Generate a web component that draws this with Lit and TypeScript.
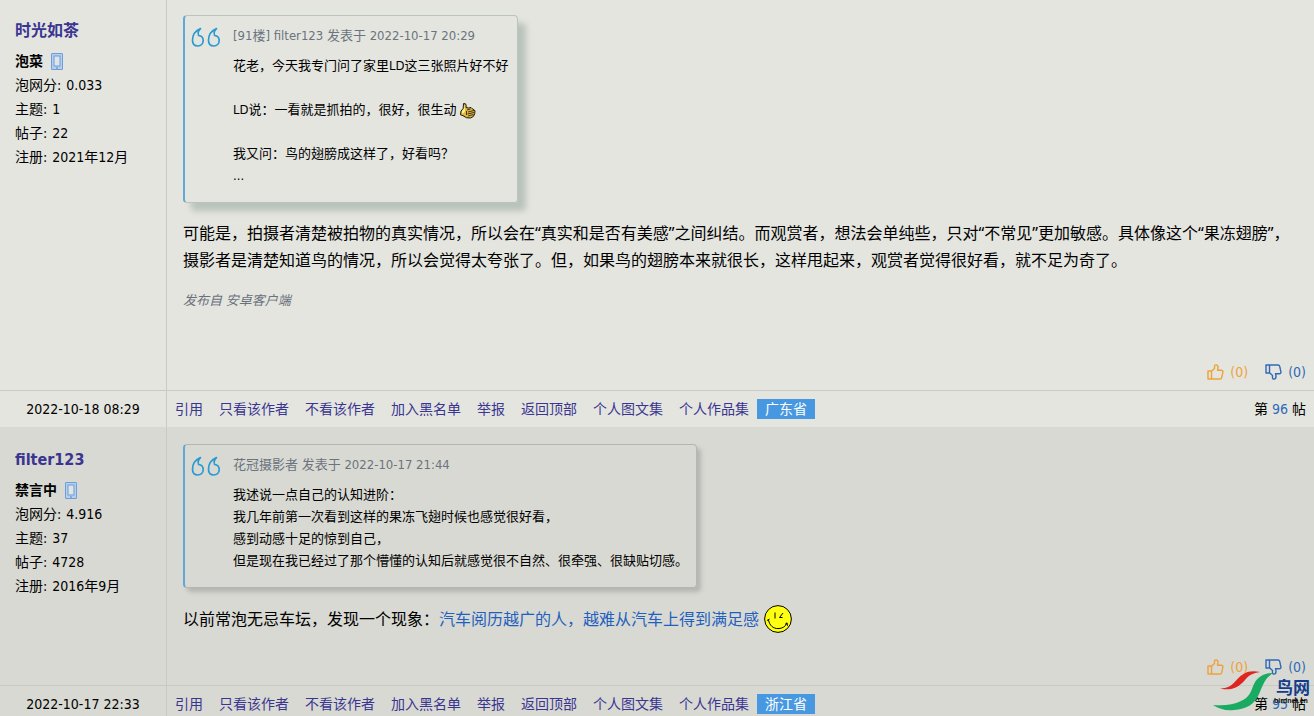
import { LitElement, html, css, nothing } from "lit";
import { customElement, property } from "lit/decorators.js";

interface Post {
  user: string;
  rank: string;
  stats: [string, string][];
  date: string;
  region: string;
  floor: number;
  quoteHead: string;
  quoteLines: string[];
  thumbLine?: number;
  text: string;
  link?: string;
  signature?: string;
  alt: boolean;
}

const POSTS: Post[] = [
  {
    user: "时光如茶",
    rank: "泡菜",
    stats: [["泡网分", "0.033"], ["主题", "1"], ["帖子", "22"], ["注册", "2021年12月"]],
    date: "2022-10-18 08:29",
    region: "广东省",
    floor: 96,
    quoteHead: "[91楼] filter123 发表于 2022-10-17 20:29",
    quoteLines: ["花老，今天我专门问了家里LD这三张照片好不好", "", "LD说：一看就是抓拍的，很好，很生动", "", "我又问：鸟的翅膀成这样了，好看吗？", "..."],
    thumbLine: 2,
    text: "可能是，拍摄者清楚被拍物的真实情况，所以会在“真实和是否有美感”之间纠结。而观赏者，想法会单纯些，只对“不常见”更加敏感。具体像这个“果冻翅膀”，摄影者是清楚知道鸟的情况，所以会觉得太夸张了。但，如果鸟的翅膀本来就很长，这样甩起来，观赏者觉得很好看，就不足为奇了。",
    signature: "发布自 安卓客户端",
    alt: false,
  },
  {
    user: "filter123",
    rank: "禁言中",
    stats: [["泡网分", "4.916"], ["主题", "37"], ["帖子", "4728"], ["注册", "2016年9月"]],
    date: "2022-10-17 22:33",
    region: "浙江省",
    floor: 95,
    quoteHead: "花冠摄影者 发表于 2022-10-17 21:44",
    quoteLines: ["我述说一点自己的认知进阶：", "我几年前第一次看到这样的果冻飞翅时候也感觉很好看，", "感到动感十足的惊到自己，", "但是现在我已经过了那个懵懂的认知后就感觉很不自然、很牵强、很缺贴切感。"],
    text: "以前常泡无忌车坛，发现一个现象：",
    link: "汽车阅历越广的人，越难从汽车上得到满足感",
    alt: true,
  },
];

const ACTIONS = ["引用", "只看该作者", "不看该作者", "加入黑名单", "举报", "返回顶部", "个人图文集", "个人作品集"];

const phoneIcon = html`<svg class="phone" viewBox="0 0 12 17" width="12" height="17" aria-hidden="true">
  <rect x="0.5" y="0.5" width="11" height="16" rx="0.5" fill="#b9cfe8" stroke="#6a9ede" />
  <rect x="3" y="3" width="6" height="10" fill="#dfe4e4" stroke="#6a9ede" />
  <path d="M5 15h2" stroke="#4f86d0" />
</svg>`;

const quoteIcon = html`<svg class="marks" viewBox="0 0 30 21" width="30" height="21" fill="none" stroke="#2a9ad2" stroke-width="1.7" stroke-linecap="round" stroke-linejoin="round" aria-hidden="true">
  <path d="M9.500 1.500C4.200 3.800 1.500 8.500 1.500 13.300c0 3.600 2.200 5.700 5.300 5.700s5.400-2.200 5.400-5.400c0-3-2-4.900-4.600-5.100-.9-2.400-.1-5.200 1.900-7z" />
  <path d="M25.500 1.500C20.200 3.800 17.500 8.500 17.500 13.300c0 3.600 2.200 5.700 5.300 5.700s5.400-2.200 5.400-5.400c0-3-2-4.900-4.600-5.100-.9-2.400-.1-5.200 1.900-7z" />
</svg>`;

const thumbIcon = html`<svg class="hand" viewBox="0 0 16 16" width="16" height="16" role="img" aria-label="赞">
  <path d="M3.500.6 5.500.8 6.200 2.500 6 4.500 8.500 5 11 4.500l1.200 1.200 2.800 2-.3 3-1.200 2.600-3 1.700-4-.3-3.500-2-2.500-.9L1 8l2.200-2.500z" fill="#dcb842" stroke="#1c1608" stroke-linejoin="round" />
  <path d="M3.900 1.500 5 5.500 4.800 9 2 11V8l2-2.500z" fill="#fbf08a" />
  <path d="m7 7 3.500-1M8 9l6-1.500M7.500 11l6.500-1.500M8 13l5.500-1.500M6.500 8v4" fill="none" stroke="#4a3410" />
</svg>`;

const smileIcon = html`<svg class="smile" viewBox="0 0 28 28" width="28" height="28" role="img" aria-label="微笑">
  <circle cx="14" cy="14" r="13.4" fill="#ffff10" stroke="#000" />
  <path d="M11 7.500v6M15.500 12.500 19 8M15.500 12.500h3M3 15.500l2.500-1.500M4.500 15c1 5.500 4.800 8.600 9.500 8.600 4.400 0 7.700-2.200 9-5.600M21 19.500l2-1.700.5 3" fill="none" stroke="#000" />
</svg>`;

const rateIcon = (down: boolean) => html`<svg class=${down ? "rate down" : "rate"} viewBox="0 0 17 16" width="17" height="16" fill="none" stroke="currentColor" stroke-width="1.4" stroke-linejoin="round" aria-hidden="true">
  <path d="M1 7h3.500v8H1zM4.500 7.300 7.500 4.500V2.300C7.500 1.400 8.100.9 8.900.9c1.200 0 2.100 1.100 2.100 2.600 0 1-.2 1.900-.5 2.800h3.900c1 0 1.700.8 1.500 1.800l-1.200 5.500c-.2.800-.8 1.400-1.700 1.400H4.500" />
</svg>`;

@customElement("forum-post")
class ForumPost extends LitElement {
  @property({ attribute: false }) post!: Post;

  static styles = css`
    :host {
      display: grid;
      grid-template-columns: 166px minmax(0, 1fr);
      background: #e4e5df;
      border-bottom: 1px solid #d6d8d3;
      font-size: 14px;
      line-height: 24px;
    }
    :host([alt]) { background: #d8d9d2; }
    a { color: #3a3591; text-decoration: none; }
    .author { padding: 20px 0 0 15px; }
    .name { display: block; font-size: 16px; font-weight: bold; line-height: 24px; margin-bottom: 6px; }
    .rank { display: flex; align-items: center; gap: 8px; font-weight: bold; }
    dl { margin: 0; }
    dl div { display: flex; gap: 5px; }
    dt, dd { margin: 0; }
    .content {
      display: flex;
      flex-direction: column;
      align-items: flex-start;
      padding: 16px 8px 6px 16px;
      border-left: 1px solid #c8cac6;
    }
    :host(:not([alt])) .content { min-height: 369px; padding-top: 15px; }
    :host(:not([alt])) .author { padding-top: 19px; }
    :host([alt]) .content { min-height: 235px; }
    blockquote {
      display: flex;
      gap: 12px;
      box-sizing: border-box;
      margin: 0;
      padding: 9px 8px 15px 6px;
      border: 1px solid #b9c4be;
      border-left: 2px solid #62a8d6;
      border-radius: 4px;
      box-shadow: 8px 8px 6px #b9c3ba;
      font-size: 13px;
      line-height: 22px;
    }
    :host([alt]) blockquote { border-color: #b3b6b2 #b3b6b2 #b3b6b2 #62a8d6; box-shadow: 4px 4px 4px #b4b6b1; }
    .marks { flex: none; margin-top: 2px; }
    .head { color: #6a747e; margin-bottom: 8px; }
    .line { min-height: 22px; }
    .hand { vertical-align: -5px; margin-left: 3px; }
    .text { margin: 17px 16px 0 0; font-size: 16px; line-height: 27px; font-family: "Noto Sans", "Noto Sans CJK SC", sans-serif; }
    .text a { color: #1f5fc0; }
    .smile { vertical-align: -8px; margin-left: 5px; }
    .signature { margin: 15px 0 0; color: #6a717c; font-size: 13px; font-style: italic; }
    .rating { display: flex; gap: 17px; margin-top: auto; align-self: flex-end; }
    .rating button {
      display: flex;
      align-items: center;
      gap: 6px;
      padding: 0;
      border: 0;
      background: none;
      font: inherit;
      color: #eda23a;
      cursor: pointer;
    }
    .rating button.against { color: #2f69b8; }
    .down { transform: scaleY(-1); }
    .date, .bar { border-top: 1px solid #c8cac6; line-height: 20px; padding: 8px 0; }
    .date { text-align: center; }
    .bar { display: flex; border-left: 1px solid #c8cac6; padding-right: 8px; }
    .bar nav { display: flex; flex-wrap: wrap; }
    .bar nav a { padding: 0 8px; }
    .bar nav .region { background: #4798e0; color: #fff; }
    .floor { margin-left: auto; white-space: nowrap; }
    .floor a { color: #2f69b8; }
  `;

  render() {
    const p = this.post;
    return html`
      <section class="author">
        <a class="name" href="#">${p.user}</a>
        <div class="rank">${p.rank}${phoneIcon}</div>
        <dl>${p.stats.map(([k, v]) => html`<div><dt>${k}:</dt><dd>${v}</dd></div>`)}</dl>
      </section>
      <section class="content">
        <blockquote>
          ${quoteIcon}
          <div>
            <div class="head">${p.quoteHead}</div>
            ${p.quoteLines.map((l, i) => html`<div class="line">${l}${i === p.thumbLine ? thumbIcon : nothing}</div>`)}
          </div>
        </blockquote>
        <p class="text">${p.text}${p.link ? html`<a href="#">${p.link}</a>${smileIcon}` : nothing}</p>
        ${p.signature ? html`<p class="signature">${p.signature}</p>` : nothing}
        <div class="rating">
          <button type="button">${rateIcon(false)}<span>(0)</span></button>
          <button type="button" class="against">${rateIcon(true)}<span>(0)</span></button>
        </div>
      </section>
      <div class="date"><time>${p.date}</time></div>
      <div class="bar">
        <nav>
          ${ACTIONS.map((a) => html`<a href="#">${a}</a>`)}
          <a class="region" href="#">${p.region}</a>
        </nav>
        <span class="floor">第 <a href="#">${p.floor}</a> 帖</span>
      </div>
    `;
  }
}

@customElement("app-root")
class AppRoot extends LitElement {
  static styles = css`
    :host {
      display: block;
      position: relative;
      height: 100vh;
      overflow: hidden;
      background: #d8d9d2;
      color: #000;
      font-family: "DejaVu Sans Condensed", "Noto Sans CJK SC", sans-serif;
    }
    .watermark { position: absolute; right: 3px; bottom: 3px; pointer-events: none; overflow: visible; }
    .brand { font: bold 17px "Noto Sans CJK SC", sans-serif; fill: #143c8c; }
    .site { font: bold 7px "Liberation Sans", sans-serif; fill: #101010; }
  `;

  render() {
    return html`
      ${POSTS.map((p) => html`<forum-post .post=${p} ?alt=${p.alt}></forum-post>`)}
      <svg class="watermark" viewBox="0 0 100 43" width="100" height="43" role="img" aria-label="鸟网">
        <path d="M9 18.500C18 18 21 15 26 9.500 32 3 38-.5 49 2 42 3 38 5 34 10 27 18 20 21 9 18.500z" fill="#e0251f" />
        <path d="M62 3C52 3 46 8 43 14c-3 7-4 13-13 17-8 4-17 5-28 4 6 4 13 6 21 5 13-1 20-6 24-14 4-7 5-17 15-23z" fill="#1aab62" />
        <text class="brand" x="65" y="24">鸟网</text>
        <text class="site" x="63" y="33">birdnet.cn</text>
      </svg>
    `;
  }
}
